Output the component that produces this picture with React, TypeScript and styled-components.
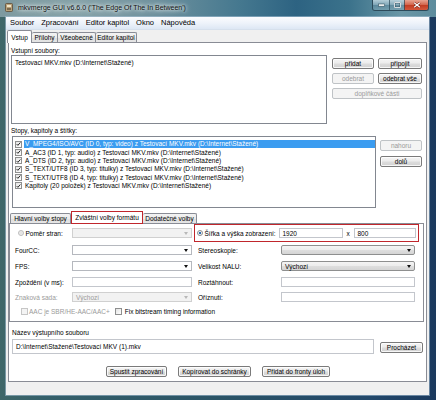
import React from 'react';
import styled, { createGlobalStyle, css } from 'styled-components';

const FONT = `"Liberation Sans", Arial, sans-serif`;

const Global = createGlobalStyle`
  html, body { margin: 0; padding: 0; width: 436px; height: 400px; overflow: hidden; background: #1c3550; }
  * { box-sizing: border-box; }
  #root { width: 436px; height: 400px; }
`;

const Window = styled.div`
  width: 436px;
  height: 400px;
  display: flex;
  flex-direction: column;
  font-family: ${FONT};
  font-size: 6.5px;
  color: #000;
  background:
    linear-gradient(90deg, #3f6769 0%, #35606a 10%, #2b5466 50%, #23486a 85%, #1b3a5e 100%);
`;

const TitleBar = styled.div`
  height: 17px;
  flex: none;
  display: flex;
  align-items: flex-start;
  padding-left: 5px;
  background: linear-gradient(90deg, #7e9aa0 0%, #86a2a8 18%, #6f929e 35%, #45788f 55%, #2d6382 68%, #3b728b 80%, #6a97a6 92%, #5d8c9d 100%);
`;

const AppIcon = styled.svg`
  width: 8px;
  height: 9px;
  margin-top: 3px;
  flex: none;
`;

const TitleText = styled.div`
  margin-left: 5px;
  line-height: 16px;
  font-size: 7px;
  color: #111;
  white-space: nowrap;
  text-shadow: 0 0 3px #e8f0f0, 0 0 5px #e8f0f0, 0 0 7px rgba(240,245,245,0.8);
`;

const CaptionGroup = styled.div`
  margin-left: auto;
  margin-right: 7px;
  display: flex;
  height: 11px;
  border: 1px solid #2c4a5a;
  border-top: none;
  border-radius: 0 0 3px 3px;
  overflow: hidden;
`;

const CaptionButton = styled.div<{ $w: number; $close?: boolean }>`
  width: ${p => p.$w}px;
  height: 100%;
  display: flex;
  align-items: center;
  justify-content: center;
  border-left: 1px solid rgba(40, 70, 85, 0.7);
  &:first-child { border-left: none; }
  ${p => p.$close
    ? css`background: linear-gradient(#e8a491 0%, #d46a52 45%, #c23e24 55%, #d4583c 100%);`
    : css`background: linear-gradient(rgba(210,228,236,0.75) 0%, rgba(160,190,205,0.6) 45%, rgba(100,140,160,0.55) 55%, rgba(130,170,185,0.6) 100%);`}
`;

const Client = styled.div`
  flex: 1;
  margin: 0 7px 5px 6px;
  display: flex;
  flex-direction: column;
  background: #f0f0f0;
  box-shadow: 0 0 0 1px rgba(170, 195, 215, 0.55);
`;

const MenuBar = styled.div`
  height: 13px;
  flex: none;
  display: flex;
  align-items: center;
  padding-left: 1px;
  background: linear-gradient(#fbfcfe 0%, #eef3fa 50%, #dde7f4 100%);
  border-bottom: 1px solid #d6e0ec;
`;

const MenuItem = styled.div`
  padding: 0 3px;
  font-size: 7.5px;
  line-height: 12px;
  margin-right: 1px;
`;

const TabsArea = styled.div`
  display: flex;
  flex-direction: column;
  padding: 0 2px;
`;

const TabStrip = styled.div<{ $ml?: number }>`
  height: 12px;
  flex: none;
  display: flex;
  align-items: flex-end;
  margin-left: ${p => p.$ml ?? 0}px;
  position: relative;
  z-index: 1;
`;

const Tab = styled.div<{ $w: number; $active?: boolean; $red?: boolean }>`
  width: ${p => p.$w}px;
  height: ${p => (p.$active ? 13 : 10)}px;
  margin-bottom: ${p => (p.$active ? -1 : 0)}px;
  display: flex;
  align-items: center;
  justify-content: center;
  font-size: 6.5px;
  white-space: nowrap;
  border: 1px solid #898c95;
  border-bottom: none;
  border-left-width: 0;
  border-radius: 2px 2px 0 0;
  &:first-child { border-left-width: 1px; }
  background: ${p => (p.$active ? '#fff' : 'linear-gradient(#f3f3f3 0%, #ebebeb 50%, #dedede 50%, #e5e5e5 100%)')};
  ${p => p.$active && css`border-left-width: 1px; margin-left: -1px;`}
  ${p => p.$red && css`
    border: 1.5px solid #c0262c;
    border-radius: 0;
    margin-left: 0;
  `}
`;

const Panel = styled.div`
  height: 340px;
  flex: none;
  border: 1px solid #898c95;
  background: #fff;
  display: flex;
  flex-direction: column;
`;

const SectionLabel = styled.div<{ $mt: number; $ml: number }>`
  height: 9px;
  line-height: 9px;
  margin-top: ${p => p.$mt}px;
  margin-left: ${p => p.$ml}px;
  white-space: nowrap;
`;

const HRow = styled.div<{ $h: number; $mt?: number }>`
  height: ${p => p.$h}px;
  margin-top: ${p => p.$mt ?? 0}px;
  display: flex;
  align-items: flex-start;
  flex: none;
`;

const ListBox = styled.div<{ $ml: number; $w: number }>`
  margin-left: ${p => p.$ml}px;
  width: ${p => p.$w}px;
  height: 100%;
  border: 1px solid #828790;
  background: #fff;
  flex: none;
`;

const FileItem = styled.div`
  padding: 3px 0 0 3px;
  line-height: 7px;
  white-space: nowrap;
`;

const ButtonGrid = styled.div`
  margin-left: 5px;
  margin-top: 3px;
  display: grid;
  grid-template-columns: 42px 44px;
  column-gap: 4px;
  row-gap: 4px;
  grid-auto-rows: 11px;
`;

const Button = styled.div<{ $w?: number; $h?: number; $disabled?: boolean; $span?: boolean }>`
  ${p => p.$w !== undefined && css`width: ${p.$w}px;`}
  height: ${p => p.$h ?? 11}px;
  ${p => p.$span && css`grid-column: 1 / span 2;`}
  flex: none;
  display: flex;
  align-items: center;
  justify-content: center;
  white-space: nowrap;
  font-size: 6.5px;
  border-radius: 2px;
  ${p => p.$disabled
    ? css`
      border: 1px solid #bfc3c6;
      background: #f4f4f4;
      color: #9a9a9a;
    `
    : css`
      border: 1px solid #7a7a7a;
      background: linear-gradient(#f4f4f4 0%, #ececec 48%, #dddddd 52%, #d2d2d2 100%);
      box-shadow: inset 0 0 0 1px rgba(255,255,255,0.8);
      color: #000;
    `}
`;

const SideButtons = styled.div`
  margin-left: 4px;
  margin-top: 4px;
  display: flex;
  flex-direction: column;
  gap: 5px;
`;

const TrackList = styled.div`
  margin-left: 3px;
  width: 364px;
  height: 100%;
  border: 1px solid #828790;
  background: #fff;
  padding-top: 3px;
  flex: none;
`;

const TrackRow = styled.div`
  height: 8.3px;
  display: flex;
  align-items: center;
  padding-left: 1px;
`;

const CheckBox = styled.div<{ $disabled?: boolean }>`
  width: 7px;
  height: 7px;
  flex: none;
  border: 1px solid ${p => (p.$disabled ? '#c6c6c6' : '#8e8f8f')};
  background: ${p => (p.$disabled ? '#f4f4f4' : 'linear-gradient(135deg, #e4e4e4, #fff)')};
  display: flex;
  align-items: center;
  justify-content: center;
`;

const TrackText = styled.div<{ $sel?: boolean }>`
  flex: 1;
  margin-left: 2px;
  padding-left: 1px;
  height: 7.6px;
  line-height: 7.6px;
  white-space: nowrap;
  ${p => p.$sel && css`
    background: #3b9cf0;
    color: #fff;
  `}
`;

const InnerPanel = styled.div`
  width: 415px;
  height: 99px;
  border: 1px solid #898c95;
  background: #fff;
  padding-left: 5px;
  display: flex;
  flex-direction: column;
  flex: none;
`;

const FormRow = styled.div<{ $h?: number; $mt?: number }>`
  height: ${p => p.$h ?? 10}px;
  margin-top: ${p => p.$mt ?? 0}px;
  display: flex;
  align-items: center;
  flex: none;
`;

const FormLabel = styled.div<{ $w: number; $disabled?: boolean }>`
  width: ${p => p.$w}px;
  flex: none;
  white-space: nowrap;
  display: flex;
  align-items: center;
  color: ${p => (p.$disabled ? '#9a9a9a' : '#000')};
`;

type ComboKind = 'edit' | 'drop' | 'disabled';

const ComboBox = styled.div<{ $w: number; $kind: ComboKind }>`
  width: ${p => p.$w}px;
  height: 10px;
  flex: none;
  display: flex;
  align-items: center;
  padding-left: 3px;
  padding-right: 2px;
  white-space: nowrap;
  border-radius: ${p => (p.$kind === 'drop' ? 2 : 0)}px;
  ${p => p.$kind === 'edit' && css`
    border: 1px solid #b5b8be;
    background: #fff;
  `}
  ${p => p.$kind === 'drop' && css`
    border: 1px solid #8e8f8f;
    background: linear-gradient(#f4f4f4 0%, #ececec 48%, #dedede 52%, #d5d5d5 100%);
  `}
  ${p => p.$kind === 'disabled' && css`
    border: 1px solid #d0d0d0;
    background: #f2f2f2;
    color: #9a9a9a;
  `}
`;

const ComboText = styled.span`
  flex: 1;
`;

const Arrow = styled.div<{ $disabled?: boolean }>`
  width: 0;
  height: 0;
  border-left: 2.5px solid transparent;
  border-right: 2.5px solid transparent;
  border-top: 3px solid ${p => (p.$disabled ? '#b8b8b8' : '#111')};
  margin-right: 1px;
`;

const TextInput = styled.div<{ $w: number; $h?: number; $pl?: number }>`
  width: ${p => p.$w}px;
  height: ${p => p.$h ?? 10}px;
  flex: none;
  border: 1px solid #c3c6cc;
  background: #fff;
  display: flex;
  align-items: center;
  padding-left: ${p => p.$pl ?? 3}px;
  white-space: nowrap;
`;

const Radio = styled.div<{ $checked?: boolean; $disabled?: boolean; $ml?: number }>`
  width: 6px;
  height: 6px;
  flex: none;
  border-radius: 50%;
  margin-left: ${p => p.$ml ?? 0}px;
  margin-right: 1.5px;
  border: 1px solid ${p => (p.$disabled ? '#bdbdbd' : '#8e8f8f')};
  background: ${p => (p.$checked
    ? 'radial-gradient(circle, #1f4f86 0%, #3a7fc4 40%, #eef2f6 45%, #f2f2f2 100%)'
    : 'radial-gradient(circle, #e0e0e0 0%, #f4f4f4 100%)')};
`;

const RedBox = styled.div`
  margin-left: 2px;
  width: 225px;
  height: 18px;
  border: 1.5px solid #c0262c;
  display: flex;
  align-items: center;
  padding-left: 1.5px;
`;

const Times = styled.div`
  width: 11px;
  text-align: center;
  flex: none;
`;

const CheckLabel = styled.div<{ $disabled?: boolean; $ml?: number }>`
  display: flex;
  align-items: center;
  margin-left: ${p => p.$ml ?? 0}px;
  white-space: nowrap;
  color: ${p => (p.$disabled ? '#9a9a9a' : '#000')};
  & > span { margin-left: ${p => (p.$disabled ? 1 : 3)}px; }
`;

const BottomBar = styled.div`
  margin-top: 12px;
  display: flex;
  justify-content: center;
  gap: 11px;
  padding-left: 1px;
`;

const Check = () => (
  <svg width="6" height="6" viewBox="0 0 6 6">
    <path d="M0.8 3.1 L2.3 4.6 L5.2 1.2" fill="none" stroke="#111" strokeWidth="1.1" />
  </svg>
);

const tracks = [
  'V_MPEG4/ISO/AVC (ID 0, typ: video) z Testovací MKV.mkv (D:\\Internet\\Stažené)',
  'A_AC3 (ID 1, typ: audio) z Testovací MKV.mkv (D:\\Internet\\Stažené)',
  'A_DTS (ID 2, typ: audio) z Testovací MKV.mkv (D:\\Internet\\Stažené)',
  'S_TEXT/UTF8 (ID 3, typ: titulky) z Testovací MKV.mkv (D:\\Internet\\Stažené)',
  'S_TEXT/UTF8 (ID 4, typ: titulky) z Testovací MKV.mkv (D:\\Internet\\Stažené)',
  'Kapitoly (20 položek) z Testovací MKV.mkv (D:\\Internet\\Stažené)',
];

export default function App() {
  return (
    <>
      <Global />
      <Window>
        <TitleBar>
          <AppIcon viewBox="0 0 8 9">
            <rect x="0.5" y="0.5" width="7" height="8" rx="1" fill="#b9a27a" stroke="#5a4a35" strokeWidth="0.8" />
            <rect x="2" y="2" width="4" height="2" fill="#efe4c8" />
            <rect x="2" y="5" width="4" height="2" fill="#7d6a4c" />
          </AppIcon>
          <TitleText>mkvmerge GUI v6.6.0 ('The Edge Of The In Between')</TitleText>
          <CaptionGroup>
            <CaptionButton $w={16}>
              <svg width="7" height="4" viewBox="0 0 7 4">
                <rect x="0.5" y="1" width="6" height="2.2" fill="#fff" stroke="#33505f" strokeWidth="0.6" />
              </svg>
            </CaptionButton>
            <CaptionButton $w={15}>
              <svg width="7" height="6" viewBox="0 0 7 6">
                <rect x="0.6" y="0.6" width="5.8" height="4.8" fill="none" stroke="#33505f" strokeWidth="1.6" />
                <rect x="0.6" y="0.6" width="5.8" height="4.8" fill="none" stroke="#fff" strokeWidth="0.8" />
              </svg>
            </CaptionButton>
            <CaptionButton $w={24} $close>
              <svg width="8" height="6" viewBox="0 0 8 6">
                <path d="M1.2 0.8 L6.8 5.2 M6.8 0.8 L1.2 5.2" stroke="#6a1a10" strokeWidth="2.2" />
                <path d="M1.2 0.8 L6.8 5.2 M6.8 0.8 L1.2 5.2" stroke="#fff" strokeWidth="1.3" />
              </svg>
            </CaptionButton>
          </CaptionGroup>
        </TitleBar>
        <Client>
          <MenuBar>
            <MenuItem>Soubor</MenuItem>
            <MenuItem>Zpracování</MenuItem>
            <MenuItem>Editor kapitol</MenuItem>
            <MenuItem>Okno</MenuItem>
            <MenuItem>Nápověda</MenuItem>
          </MenuBar>
          <TabsArea>
            <TabStrip>
              <Tab $w={25} $active>Vstup</Tab>
              <Tab $w={26}>Přílohy</Tab>
              <Tab $w={38}>Všeobecné</Tab>
              <Tab $w={41}>Editor kapitol</Tab>
            </TabStrip>
            <Panel>
              <SectionLabel $mt={3} $ml={2}>Vstupní soubory:</SectionLabel>
              <HRow $h={69}>
                <ListBox $ml={2} $w={316}>
                  <FileItem>Testovací MKV.mkv (D:\Internet\Stažené)</FileItem>
                </ListBox>
                <ButtonGrid>
                  <Button>přidat</Button>
                  <Button>připojit</Button>
                  <Button $disabled>odebrat</Button>
                  <Button>odebrat vše</Button>
                  <Button $disabled $span>doplňkové části</Button>
                </ButtonGrid>
              </HRow>
              <SectionLabel $mt={2} $ml={2}>Stopy, kapitoly a štítky:</SectionLabel>
              <HRow $h={72} $mt={1}>
                <TrackList>
                  {tracks.map((t, i) => (
                    <TrackRow key={i}>
                      <CheckBox style={{ marginLeft: 1 }}>
                        <Check />
                      </CheckBox>
                      <TrackText $sel={i === 0}>{t}</TrackText>
                    </TrackRow>
                  ))}
                </TrackList>
                <SideButtons>
                  <Button $w={42} $disabled>nahoru</Button>
                  <Button $w={42}>dolů</Button>
                </SideButtons>
              </HRow>
              <TabStrip $ml={1} style={{ marginTop: 3 }}>
                <Tab $w={61}>Hlavní volby stopy</Tab>
                <Tab $w={72} $active $red>Zvláštní volby formátu</Tab>
                <Tab $w={54}>Dodatečné volby</Tab>
              </TabStrip>
              <InnerPanel>
                <FormRow $h={18}>
                  <FormLabel $w={57}>
                    <Radio $ml={3} $disabled />
                    <span>Poměr stran:</span>
                  </FormLabel>
                  <ComboBox $w={120} $kind="disabled">
                    <ComboText />
                    <Arrow $disabled />
                  </ComboBox>
                  <RedBox>
                    <Radio $checked />
                    <FormLabel $w={74} style={{ marginLeft: 0.5 }}>Šířka a výška zobrazení:</FormLabel>
                    <TextInput $w={64}>1920</TextInput>
                    <Times>x</Times>
                    <TextInput $w={62}>800</TextInput>
                  </RedBox>
                </FormRow>
                <FormRow $mt={3}>
                  <FormLabel $w={57}>FourCC:</FormLabel>
                  <ComboBox $w={120} $kind="edit">
                    <ComboText />
                    <Arrow />
                  </ComboBox>
                  <FormLabel $w={83} style={{ marginLeft: 6 }}>Stereoskopie:</FormLabel>
                  <ComboBox $w={134} $kind="drop">
                    <ComboText />
                    <Arrow />
                  </ComboBox>
                </FormRow>
                <FormRow $mt={6}>
                  <FormLabel $w={57}>FPS:</FormLabel>
                  <ComboBox $w={120} $kind="edit">
                    <ComboText />
                    <Arrow />
                  </ComboBox>
                  <FormLabel $w={83} style={{ marginLeft: 6 }}>Velikost NALU:</FormLabel>
                  <ComboBox $w={134} $kind="drop">
                    <ComboText>Výchozí</ComboText>
                    <Arrow />
                  </ComboBox>
                </FormRow>
                <FormRow $mt={6}>
                  <FormLabel $w={57}>Zpoždění (v ms):</FormLabel>
                  <TextInput $w={120} />
                  <FormLabel $w={83} style={{ marginLeft: 6 }}>Roztáhnout:</FormLabel>
                  <TextInput $w={134} />
                </FormRow>
                <FormRow $mt={5}>
                  <FormLabel $w={57} $disabled>Znaková sada:</FormLabel>
                  <ComboBox $w={120} $kind="disabled">
                    <ComboText>Výchozí</ComboText>
                    <Arrow $disabled />
                  </ComboBox>
                  <FormLabel $w={83} style={{ marginLeft: 6 }}>Oříznutí:</FormLabel>
                  <TextInput $w={134} />
                </FormRow>
                <FormRow $mt={4}>
                  <CheckLabel $disabled $ml={6}>
                    <CheckBox $disabled />
                    <span>AAC je SBR/HE-AAC/AAC+</span>
                  </CheckLabel>
                  <CheckLabel $ml={5}>
                    <CheckBox />
                    <span>Fix bitstream timing information</span>
                  </CheckLabel>
                </FormRow>
              </InnerPanel>
              <SectionLabel $mt={6} $ml={3}>Název výstupního souboru</SectionLabel>
              <HRow $h={15} $mt={2}>
                <TextInput $w={362} $h={15} $pl={3} style={{ marginLeft: 3 }}>
                  D:\Internet\Stažené\Testovací MKV (1).mkv
                </TextInput>
                <Button $w={43} style={{ marginLeft: 6, marginTop: 3 }}>Procházet</Button>
              </HRow>
              <BottomBar>
                <Button $w={61}>Spustit zpracování</Button>
                <Button $w={73}>Kopírovat do schránky</Button>
                <Button $w={68}>Přidat do fronty úloh</Button>
              </BottomBar>
            </Panel>
          </TabsArea>
        </Client>
      </Window>
    </>
  );
}
